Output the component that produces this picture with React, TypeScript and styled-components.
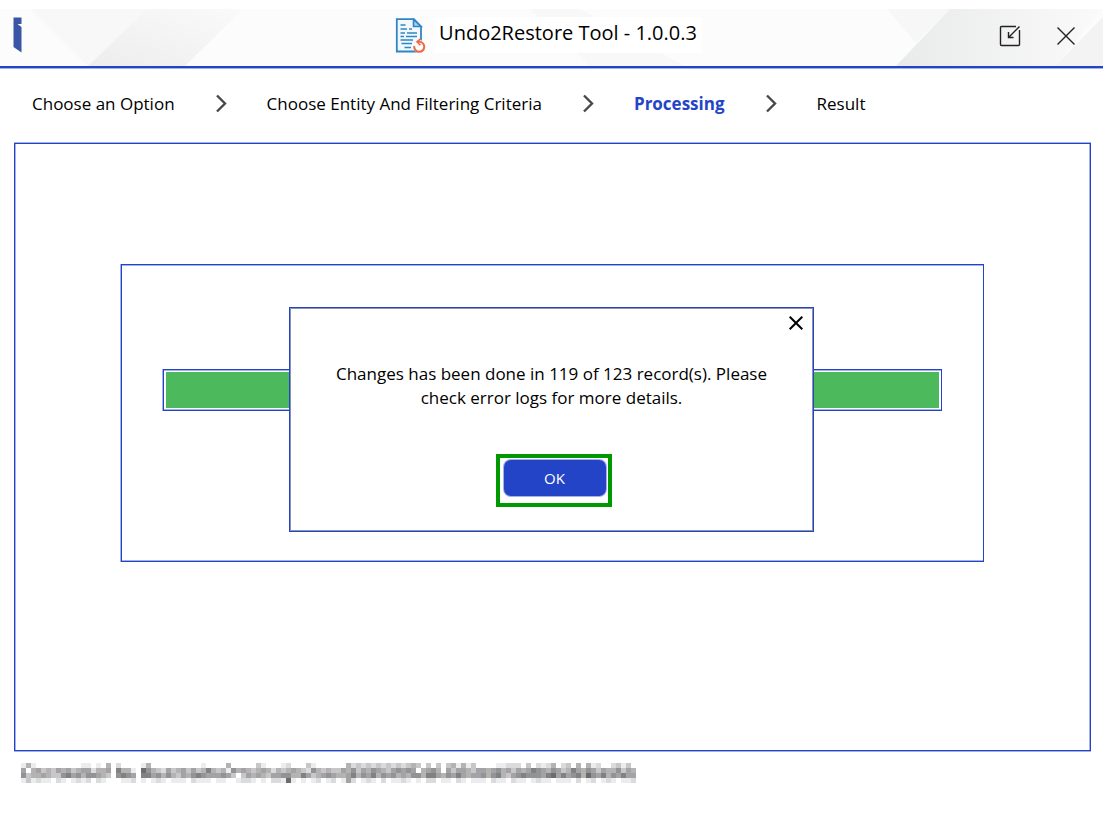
import React from "react";
import styled, { createGlobalStyle } from "styled-components";

const blue = "#2444c8";
const paleBlue = "#a3b1ea";

const GlobalStyle = createGlobalStyle`
  * { box-sizing: border-box; }
  body {
    margin: 0;
    background: #fff;
    color: #000;
    font-family: "Open Sans", "Noto Sans", sans-serif;
    font-size: 17px;
  }
`;

const Window = styled.div`
  padding-top: 9px;
`;

const TitleBar = styled.header`
  position: relative;
  display: grid;
  grid-template-columns: 1fr auto 1fr;
  align-items: center;
  height: 59px;
  border-bottom: 2px solid ${blue};
  box-shadow: 0 1px 0 ${paleBlue};
  background: #fcfcfc;
`;

const Facets = styled.svg`
  position: absolute;
  inset: 0;
  width: 100%;
  height: 57px;
`;

const LogoArea = styled.div`
  position: relative;
  display: flex;
  padding: 0 0 6px 13px;
`;

const Brand = styled.div`
  position: relative;
  display: flex;
  align-items: center;
  gap: 8px;
  padding: 0 6px 6px 0;
`;

const Title = styled.h1`
  margin: 0;
  padding: 0 5px 4px;
  background: #fff;
  font-size: 20px;
  line-height: 32px;
  font-weight: 400;
  white-space: nowrap;
`;

const WindowButtons = styled.div`
  position: relative;
  display: flex;
  justify-content: flex-end;
  align-items: center;
  gap: 32px;
  padding: 0 25px 3px 0;
`;

const IconButton = styled.button`
  display: flex;
  align-items: center;
  justify-content: center;
  padding: 0;
  border: 0;
  background: transparent;
  cursor: pointer;
`;

const Steps = styled.ol`
  display: flex;
  align-items: center;
  gap: 40px;
  margin: 0;
  padding: 24px 32px 0;
  list-style: none;
`;

const Step = styled.li<{ $active?: boolean }>`
  line-height: 24px;
  white-space: nowrap;
  color: ${(p) => (p.$active ? blue : "#000")};
  font-weight: ${(p) => (p.$active ? 700 : 400)};
`;

const Separator = styled.li`
  display: flex;
`;

const Panel = styled.main`
  margin: 27px 12px 0 14px;
  padding: 120px 106px 188px;
  border: 1px solid ${blue};
  box-shadow: 0 -1px 0 ${paleBlue}, 0 1px 0 ${paleBlue},
    inset 1px 0 0 ${paleBlue}, inset -1px 0 0 ${paleBlue};
`;

const ProgressCard = styled.section`
  position: relative;
  height: 298px;
  padding: 104px 41px 0;
  border: 1px solid ${blue};
  box-shadow: -1px 0 0 ${paleBlue}, inset 0 1px 0 ${paleBlue},
    inset 0 -1px 0 ${paleBlue};
`;

const ProgressBar = styled.progress`
  appearance: none;
  display: block;
  width: 100%;
  height: 42px;
  padding: 2px;
  border: 1px solid ${blue};
  background: #fff;
  box-shadow: -1px 0 0 ${paleBlue}, inset 0 1px 0 ${paleBlue},
    inset 0 -1px 0 ${paleBlue};

  &::-webkit-progress-bar {
    background: #fff;
  }
  &::-webkit-progress-value {
    background: #4cb95c;
  }
`;

const Dialog = styled.div`
  position: absolute;
  top: 42px;
  left: 167px;
  right: 169px;
  display: flex;
  flex-direction: column;
  align-items: center;
  height: 225px;
  border: 1px solid ${blue};
  background: #fff;
  box-shadow: inset 0 0 0 1px #8b93ae;
`;

const DialogHeader = styled.div`
  display: flex;
  align-self: stretch;
  justify-content: flex-end;
  padding: 8px 10px 0;
`;

const Message = styled.p`
  width: 460px;
  max-width: 90%;
  margin: 32px 0 0;
  text-align: center;
  line-height: 24px;
`;

const Highlight = styled.div`
  display: flex;
  margin-top: 44px;
  margin-left: 4px;
  padding: 2px 2px 7px 4px;
  border: 4px solid #009a00;
`;

const OkButton = styled.button`
  width: 102px;
  height: 36px;
  padding: 0;
  border: 0;
  border-radius: 7px;
  background: ${blue};
  box-shadow: 0 0 0 1px ${paleBlue};
  color: #fff;
  font-family: inherit;
  font-size: 15px;
  cursor: pointer;
`;

const StatusBar = styled.footer`
  display: flex;
  padding: 12px 21px 40px;
`;

/* Darkness of each 5px block of the obscured connection line, 0 to 9. */
const mosaicRows = [
  "141000000000110104020000140000000000100004000003100012000310000004232323232323430303034141300001122203021240230404120023130" + "312",
  "504534354534552445074410864325345353474341645434542434543264343354635465435656504564053554355456453545765465347546535446" + "354",
  "634454336756466543067650775646435467655565303545435566447534565445746574656454664775465754556467435676665785756748657465" + "755",
  "131211021012120210001120101210111021110110012210102218101012012015201210201121010220110210111021102110121101110201201210" + "112",
];
const shades = [
  "#ffffff", "#ececee", "#dadbdd", "#c8c6c8", "#b4b3b2",
  "#a3a3a5", "#929394", "#808182", "#6b6c6b", "#555656",
];

function Mosaic() {
  return (
    <svg width="615" height="20" role="img" aria-label="Obscured connection details" shapeRendering="crispEdges">
      {mosaicRows.map((row, y) =>
        [...row].map((level, x) =>
          level === "0" ? null : (
            <rect key={`${x}-${y}`} x={x * 5} y={y * 5} width="5" height="5" fill={shades[Number(level)]} />
          )
        )
      )}
    </svg>
  );
}

function Chevron() {
  return (
    <svg width="12" height="20" viewBox="0 0 12 20" fill="none" stroke="#484848" strokeWidth="2.4" aria-hidden="true">
      <path d="M2 1.5 10 9.500 2 17.500" />
    </svg>
  );
}

function DocumentIcon() {
  return (
    <svg width="31" height="36" viewBox="0 0 31 36" fill="none" aria-hidden="true">
      <path d="M1.800 2.200H19L26 9.500V34.500H1.800Z" fill="#f2f8fc" stroke="#2f86c6" strokeWidth="1.800" />
      <path d="M18.500 2.500V9.500H26Z" fill="#a9cfe9" stroke="#2f86c6" strokeWidth="1.600" />
      <path
        d="M5.500 8H10.500M14 12H17M5.500 12H12M5.500 16H10M12 16H22M5.500 19.500H9M11 19.500H22M5.500 23H18M6.500 26.500H17M9.500 30.500H16"
        stroke="#2f86c6"
        strokeWidth="1.700"
      />
      <circle cx="24.500" cy="29.500" r="6.500" fill="#fcfcfc" />
      <path d="M22.500 24.800H24.300A5 5 0 1 1 19.300 29" stroke="#f0693f" strokeWidth="2" />
      <path d="M25.500 21.800 22 24.800 25.500 28.300" stroke="#f0693f" strokeWidth="1.600" />
    </svg>
  );
}

export default function App() {
  return (
    <Window>
      <GlobalStyle />
      <TitleBar>
        <Facets viewBox="0 0 1103 57" preserveAspectRatio="none" aria-hidden="true">
          <defs>
            <linearGradient id="band" x1="0" x2="1" y1="1" y2="0">
              <stop offset="0" stopColor="#ededed" />
              <stop offset="1" stopColor="#fafafa" />
            </linearGradient>
            <linearGradient id="corner" x1="0" x2="1">
              <stop offset="0" stopColor="#e9eaea" />
              <stop offset="1" stopColor="#fafafa" />
            </linearGradient>
          </defs>
          <path d="M30 0H147L88 57Z" fill="#f8f8f8" />
          <path d="M147 0H243L185 57H88Z" fill="url(#band)" />
          <path d="M530 0H580L685 57H590Z" fill="#f8f8f8" />
          <path d="M887 0H950L916 34Z" fill="#f7f7f7" />
          <path d="M950 0H1103L1055 57H896Z" fill="url(#corner)" />
          <path d="M1103 8V57H1055Z" fill="#f3f3f3" />
        </Facets>
        <LogoArea>
          <svg width="9" height="36" viewBox="0 0 9 36" role="img" aria-label="Company logo">
            <path d="M0.500 0.500H8.500V7H4.500L8.500 10V35.500L0.500 30Z" fill="#3a54a6" />
          </svg>
        </LogoArea>
        <Brand>
          <DocumentIcon />
          <Title>Undo2Restore Tool - 1.0.0.3</Title>
        </Brand>
        <WindowButtons>
          <IconButton type="button" aria-label="Restore window">
            <svg width="24" height="24" viewBox="0 0 24 24" fill="none" stroke="#222" strokeWidth="1.400">
              <path d="M18 2.500H3.500Q2.500 2.500 2.500 3.500V20.500Q2.500 21.500 3.500 21.500H20.500Q21.500 21.500 21.500 20.500V6M21.500 2.500 10.500 13.500M10.500 8V13.500H15.500" />
            </svg>
          </IconButton>
          <IconButton type="button" aria-label="Close window">
            <svg width="24" height="24" viewBox="0 0 24 24" fill="none" stroke="#222" strokeWidth="1.400">
              <path d="M3.500 3.500 20.500 20.500M20.500 3.500 3.500 20.500" />
            </svg>
          </IconButton>
        </WindowButtons>
      </TitleBar>

      <nav aria-label="Progress steps">
        <Steps>
          <Step>Choose an Option</Step>
          <Separator aria-hidden="true"><Chevron /></Separator>
          <Step>Choose Entity And Filtering Criteria</Step>
          <Separator aria-hidden="true"><Chevron /></Separator>
          <Step $active aria-current="step">Processing</Step>
          <Separator aria-hidden="true"><Chevron /></Separator>
          <Step>Result</Step>
        </Steps>
      </nav>

      <Panel>
        <ProgressCard>
          <ProgressBar value={100} max={100} aria-label="Restore progress" />
          <Dialog role="dialog" aria-describedby="result-message">
            <DialogHeader>
              <IconButton type="button" aria-label="Close dialog">
                <svg width="14" height="14" viewBox="0 0 14 14" fill="none" stroke="#000" strokeWidth="2">
                  <path d="M0.700 0.700 13.300 13.300M13.300 0.700 0.700 13.300" />
                </svg>
              </IconButton>
            </DialogHeader>
            <Message id="result-message">
              Changes has been done in 119 of 123 record(s). Please check error logs for more details.
            </Message>
            <Highlight>
              <OkButton type="button">OK</OkButton>
            </Highlight>
          </Dialog>
        </ProgressCard>
      </Panel>

      <StatusBar>
        <Mosaic />
      </StatusBar>
    </Window>
  );
}
